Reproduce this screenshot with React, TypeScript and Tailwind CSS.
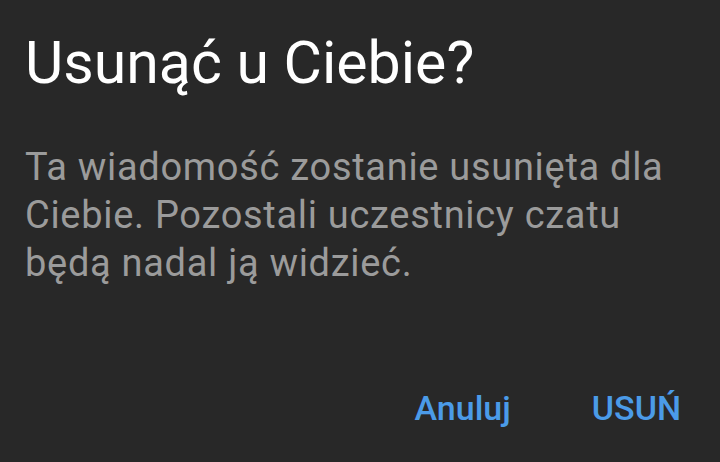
export default function App() {
  return (
    <div
      className="w-[720px] h-[462px] bg-[#282828] flex flex-col overflow-hidden"
      style={{ fontFamily: "Roboto, 'Noto Sans', sans-serif" }}
    >
      <h1 className="pl-[25px] pt-[28px] text-[59px] leading-[70px] text-white">Usunąć u Ciebie?</h1>
      <p className="pl-[25px] pr-[40px] mt-[45px] text-[38px] leading-[48px] tracking-[0.7px] text-[#9b9b9b]">
        Ta wiadomość zostanie usunięta dla Ciebie. Pozostali uczestnicy czatu będą nadal ją widzieć.
      </p>
      <div className="mt-auto mb-[34px] flex justify-end gap-[81px] pr-[39px] text-[34px] leading-[40px] font-medium text-[#4b9be8]">
        <span>Anuluj</span>
        <span>USUŃ</span>
      </div>
    </div>
  );
}
